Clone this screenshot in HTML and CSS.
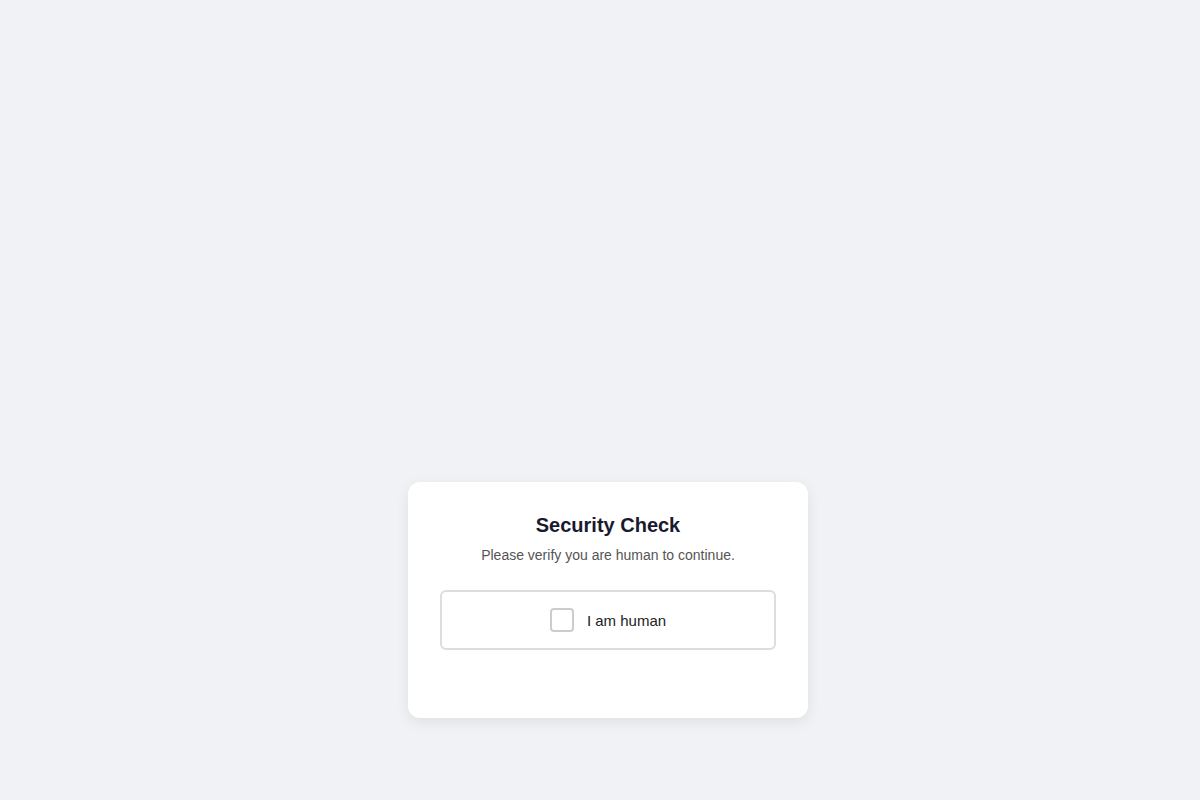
FILE: index.html
```html
<!DOCTYPE html>
<html lang="en">
<head>
<meta charset="utf-8">
<title>Security Check</title>
<link rel="stylesheet" href="styles.css">
</head>
<body>
<main class="page">
  <section class="card">
    <h1 class="title">Security Check</h1>
    <p class="subtitle">Please verify you are human to continue.</p>
    <label class="verify">
      <span class="box"></span>
      <span class="label">I am human</span>
    </label>
    <div class="status"></div>
  </section>
</main>
</body>
</html>
```

FILE: styles.css
```css
html, body {
  margin: 0;
  padding: 0;
}
body {
  background: #f0f2f5;
  font-family: "Liberation Sans", Arial, sans-serif;
  min-height: 800px;
}
.page {
  display: flex;
  justify-content: center;
  padding: 482px 0 0 16px;
}
.card {
  width: 400px;
  box-sizing: border-box;
  background: #ffffff;
  border-radius: 12px;
  padding: 32px;
  box-shadow: 0 4px 14px rgba(0, 0, 0, 0.08);
  text-align: center;
}
.title {
  margin: 0;
  font-size: 20px;
  font-weight: 700;
  color: #1a1a2e;
  line-height: normal;
}
.subtitle {
  margin: 8px 0 0;
  font-size: 14px;
  line-height: 1.5;
  color: #555555;
}
.verify {
  margin-top: 24px;
  display: flex;
  align-items: center;
  justify-content: center;
  gap: 13px;
  padding: 16px;
  border: 2px solid #dddddd;
  border-radius: 6px;
  cursor: pointer;
}
.box {
  width: 24px;
  height: 24px;
  box-sizing: border-box;
  border: 2px solid #cccccc;
  border-radius: 4px;
  background: #ffffff;
}
.label {
  font-size: 15px;
  color: #222222;
}
.status {
  height: 20px;
  margin-top: 16px;
}
```
